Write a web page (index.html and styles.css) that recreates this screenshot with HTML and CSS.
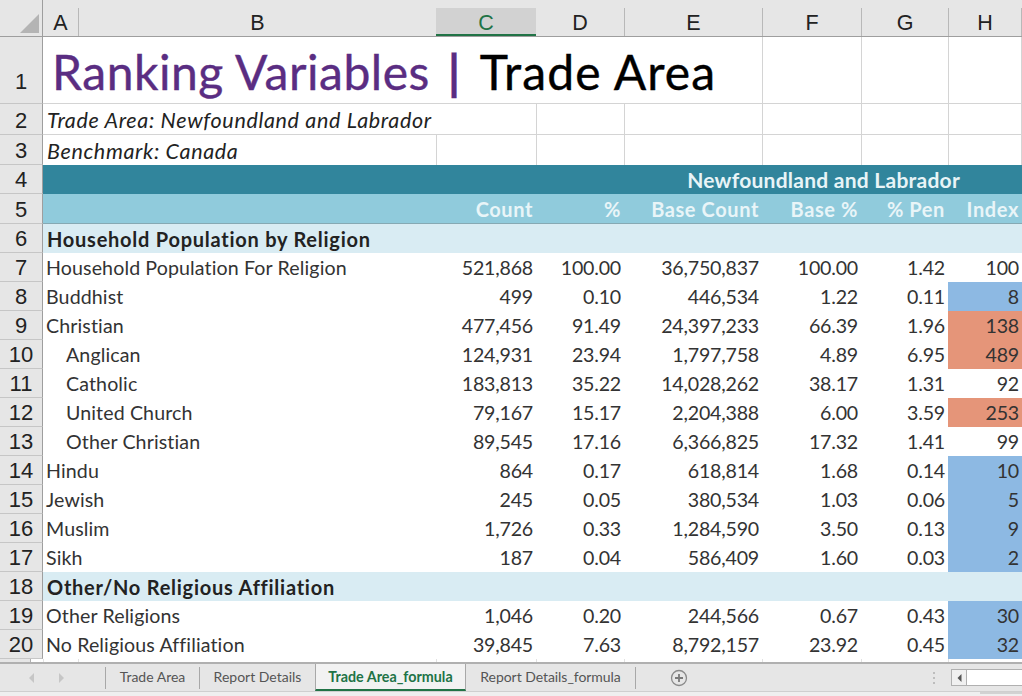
FILE: index.html

```html
<!DOCTYPE html>
<html lang="en">
<head>
    <meta charset="UTF-8">
    <meta name="viewport" content="width=device-width, initial-scale=1.0">
    <title>Ranking Variables</title>
    <link rel="stylesheet" href="styles.css">
</head>
<body>
    <table class="sheet">
        <colgroup>
            <col class="c-rh"><col class="c-a"><col class="c-b"><col class="c-c"><col class="c-d"><col class="c-e"><col class="c-f"><col class="c-g"><col class="c-h">
        </colgroup>
        <tr class="r-head">
            <th class="corner"><svg width="42" height="36" viewBox="0 0 42 36"><polygon points="20,33 39,14 39,33" fill="#b4b4b4"/></svg></th>
            <th><div class="col first-col">A</div></th>
            <th><div class="col">B</div></th>
            <th><div class="col sel">C</div></th>
            <th><div class="col after-sel">D</div></th>
            <th><div class="col">E</div></th>
            <th><div class="col">F</div></th>
            <th><div class="col">G</div></th>
            <th><div class="col last-col">H</div></th>
        </tr>
        <tr class="r-title">
            <th class="rh">1</th>
            <td colspan="5" class="title"><span class="purple">Ranking Variables <span class="pipe">|</span></span> Trade Area</td>
            <td class="line"></td><td class="line"></td><td class="line"></td>
        </tr>
        <tr class="r-2">
            <th class="rh">2</th>
            <td colspan="3" class="line note">Trade Area: Newfoundland and Labrador</td>
            <td class="line"></td><td class="line"></td><td class="line"></td><td class="line"></td><td class="line"></td>
        </tr>
        <tr class="r-3">
            <th class="rh">3</th>
            <td colspan="2" class="line note">Benchmark: Canada</td>
            <td class="line"></td><td class="line"></td><td class="line"></td><td class="line"></td><td class="line"></td><td class="line"></td>
        </tr>
        <tr class="r-4">
            <th class="rh">4</th>
            <td colspan="8" class="banner">Newfoundland and Labrador</td>
        </tr>
        <tr class="r-5">
            <th class="rh">5</th>
            <td colspan="2" class="sub"></td>
            <td class="sub">Count</td><td class="sub">%</td><td class="sub">Base Count</td><td class="sub">Base %</td><td class="sub">% Pen</td><td class="sub">Index</td>
        </tr>
        <tr>
            <th class="rh">6</th>
            <td colspan="8" class="section">Household Population by Religion</td>
        </tr>
        <tr>
            <th class="rh">7</th>
            <td colspan="2" class="label">Household Population For Religion</td>
            <td>521,868</td><td>100.00</td><td>36,750,837</td><td>100.00</td><td>1.42</td><td>100</td>
        </tr>
        <tr>
            <th class="rh">8</th>
            <td colspan="2" class="label">Buddhist</td>
            <td>499</td><td>0.10</td><td>446,534</td><td>1.22</td><td>0.11</td><td class="low">8</td>
        </tr>
        <tr>
            <th class="rh">9</th>
            <td colspan="2" class="label">Christian</td>
            <td>477,456</td><td>91.49</td><td>24,397,233</td><td>66.39</td><td>1.96</td><td class="high">138</td>
        </tr>
        <tr>
            <th class="rh">10</th>
            <td colspan="2" class="label sub-item">Anglican</td>
            <td>124,931</td><td>23.94</td><td>1,797,758</td><td>4.89</td><td>6.95</td><td class="high">489</td>
        </tr>
        <tr>
            <th class="rh">11</th>
            <td colspan="2" class="label sub-item">Catholic</td>
            <td>183,813</td><td>35.22</td><td>14,028,262</td><td>38.17</td><td>1.31</td><td>92</td>
        </tr>
        <tr>
            <th class="rh">12</th>
            <td colspan="2" class="label sub-item">United Church</td>
            <td>79,167</td><td>15.17</td><td>2,204,388</td><td>6.00</td><td>3.59</td><td class="high">253</td>
        </tr>
        <tr>
            <th class="rh">13</th>
            <td colspan="2" class="label sub-item">Other Christian</td>
            <td>89,545</td><td>17.16</td><td>6,366,825</td><td>17.32</td><td>1.41</td><td>99</td>
        </tr>
        <tr>
            <th class="rh">14</th>
            <td colspan="2" class="label">Hindu</td>
            <td>864</td><td>0.17</td><td>618,814</td><td>1.68</td><td>0.14</td><td class="low">10</td>
        </tr>
        <tr>
            <th class="rh">15</th>
            <td colspan="2" class="label">Jewish</td>
            <td>245</td><td>0.05</td><td>380,534</td><td>1.03</td><td>0.06</td><td class="low">5</td>
        </tr>
        <tr>
            <th class="rh">16</th>
            <td colspan="2" class="label">Muslim</td>
            <td>1,726</td><td>0.33</td><td>1,284,590</td><td>3.50</td><td>0.13</td><td class="low">9</td>
        </tr>
        <tr>
            <th class="rh">17</th>
            <td colspan="2" class="label">Sikh</td>
            <td>187</td><td>0.04</td><td>586,409</td><td>1.60</td><td>0.03</td><td class="low">2</td>
        </tr>
        <tr>
            <th class="rh">18</th>
            <td colspan="8" class="section">Other/No Religious Affiliation</td>
        </tr>
        <tr>
            <th class="rh">19</th>
            <td colspan="2" class="label">Other Religions</td>
            <td>1,046</td><td>0.20</td><td>244,566</td><td>0.67</td><td>0.43</td><td class="low">30</td>
        </tr>
        <tr>
            <th class="rh">20</th>
            <td colspan="2" class="label">No Religious Affiliation</td>
            <td>39,845</td><td>7.63</td><td>8,792,157</td><td>23.92</td><td>0.45</td><td class="low">32</td>
        </tr>
        <tr class="r-cut">
            <th class="rh-cut"><div class="cut-label">20</div></th>
            <td class="tick"></td><td class="tick"></td><td class="tick"></td><td class="tick"></td><td class="tick"></td><td class="tick"></td><td class="tick"></td><td class="tick"></td>
        </tr>
    </table>

    <div class="tabbar">
        <div class="nav">
            <svg width="8" height="10" viewBox="0 0 8 10"><polygon points="6,0 1,5 6,10" fill="#c6c6c6"/></svg>
            <svg width="8" height="10" viewBox="0 0 8 10"><polygon points="2,0 7,5 2,10" fill="#c6c6c6"/></svg>
        </div>
        <div class="tab first">Trade Area</div>
        <div class="tab second">Report Details</div>
        <div class="tab active">Trade Area_formula</div>
        <div class="tab last">Report Details_formula</div>
        <svg class="add" width="18" height="18" viewBox="0 0 18 18">
            <circle cx="9" cy="9" r="7.5" fill="none" stroke="#8a8a8a" stroke-width="1.3"/>
            <path d="M9 5v8M5 9h8" stroke="#7a7a7a" stroke-width="1.8"/>
        </svg>
        <div class="dots"><i></i><i></i><i></i></div>
        <div class="scroll">
            <div class="scroll-btn"><svg width="5" height="8" viewBox="0 0 5 8"><polygon points="4.5,0 0.5,4 4.5,8" fill="#555"/></svg></div>
        </div>
    </div>
    <div class="status"><div class="status-line"></div></div>
</body>
</html>
```

FILE: styles.css

```css
* {
    box-sizing: border-box;
}
html, body {
    margin: 0;
    height: 696px;
    overflow: hidden;
    background: #fff;
}
.sheet {
    border-collapse: separate;
    border-spacing: 0;
    table-layout: fixed;
    width: 1022px;
    font-family: "Lato", "Open Sans", sans-serif;
    font-size: 19.6px;
    color: #333;
}
.c-rh { width: 43px; }
.c-a { width: 35px; }
.c-b { width: 358px; }
.c-c { width: 100px; }
.c-d { width: 88px; }
.c-e { width: 138px; }
.c-f { width: 99px; }
.c-g { width: 87px; }
.c-h { width: 74px; }

tr {
    height: 29px;
}
td {
    padding: 0 3px 0 3px;
    height: 29px;
    line-height: 28px;
    letter-spacing: -.2px;
    text-align: right;
    white-space: nowrap;
    overflow: hidden;
}

/* column header */
.r-head {
    height: 37px;
}
.r-head th {
    padding: 8px 0 0;
    height: 37px;
    background: #e6e6e6;
    border-bottom: 1px solid #9e9e9e;
    font-family: "Liberation Sans", Arial, sans-serif;
    font-weight: normal;
    font-size: 21.5px;
    color: #222;
}
.r-head .corner {
    padding: 0;
    border-right: 1px solid #9e9e9e;
    line-height: 0;
}
.col {
    height: 28px;
    line-height: 30px;
    text-align: center;
    border-left: 1px solid #b8b8b8;
}
.col.first-col, .col.after-sel {
    border-left: 0;
}
.col.last-col {
    border-right: 1px solid #b8b8b8;
}
.col.sel {
    height: 28px;
    background: #d2d2d2;
    border-left: 0;
    border-bottom: 2px solid #217346;
    color: #217346;
}

/* row header */
.rh {
    padding: 0;
    background: #e6e6e6;
    border-right: 1px solid #9e9e9e;
    border-bottom: 1px solid #c6c6c6;
    font-family: "Liberation Sans", Arial, sans-serif;
    font-weight: normal;
    font-size: 22px;
    line-height: 27px;
    color: #222;
    text-align: center;
    vertical-align: bottom;
}
.r-title .rh {
    padding-bottom: 8px;
}
.rh-cut {
    padding: 0;
    height: 3px;
}
.cut-label {
    width: 31px;
    height: 3px;
    overflow: hidden;
    background: #e6e6e6;
    border-right: 1px solid #b0b0b0;
    font-family: "Liberation Sans", Arial, sans-serif;
    font-weight: normal;
    font-size: 22px;
    line-height: 24px;
    text-indent: 4px;
    text-align: center;
    color: #222;
}
.r-cut {
    height: 3px;
}
.tick {
    padding: 0;
    height: 3px;
    line-height: 0;
    border-left: 1px solid #e2e2e2;
}

/* top rows */
.r-title, .r-title td {
    height: 67px;
}
.r-2, .r-2 td {
    height: 31px;
}
.r-3, .r-3 td {
    height: 30px;
}
.r-4, .r-4 td {
    height: 29px;
}
.r-5, .r-5 td {
    height: 30px;
}
.title {
    padding-top: 3px;
    padding-left: 9px;
    text-align: left;
    font-size: 48px;
    letter-spacing: 1.15px;
    line-height: 63px;
    color: #000;
    -webkit-text-stroke: .4px;
    border-bottom: 1px solid #d4d4d4;
}
.purple {
    color: #5a2d82;
    letter-spacing: .55px;
}
.pipe {
    margin: 0 7px 0 5px;
    font-weight: bold;
}
.line {
    border-left: 1px solid #d4d4d4;
    border-bottom: 1px solid #d4d4d4;
}
.line:last-child {
    border-right: 1px solid #d4d4d4;
}
.r-3 .line {
    border-bottom: 0;
}
.note {
    padding-top: 2px;
    padding-left: 4px;
    text-align: left;
    font-size: 21.5px;
    letter-spacing: .65px;
    line-height: 28px;
    font-style: italic;
    color: #222;
    border-left: 0;
}
.r-3 .note {
    padding-top: 3px;
    line-height: 27px;
}
.banner {
    background: #31859c;
    color: #e8f4f7;
    font-weight: bold;
    font-size: 21px;
    letter-spacing: .25px;
    padding-right: 62px;
}
.sub {
    background: #90cbdc;
    color: #e9f5f8;
    font-weight: bold;
    font-size: 20px;
    letter-spacing: .6px;
    border-bottom: 1px solid #86a9b3;
}
.section {
    padding-left: 4px;
    text-align: left;
    background: #d9ecf3;
    font-weight: bold;
    font-size: 20px;
    letter-spacing: .75px;
    color: #222;
}
.label {
    padding-left: 3px;
    letter-spacing: .12px;
    text-align: left;
}
.sub-item {
    padding-left: 23px;
}
.low {
    background: #8db9e3;
}
.high {
    background: #e59579;
}

/* sheet tabs */
.tabbar {
    display: flex;
    align-items: center;
    height: 30px;
    background: #e6e6e6;
    border-top: 2px solid #b0b0b0;
    border-bottom: 1px solid #cfcfcf;
    font-family: "Lato", "Open Sans", sans-serif;
    font-size: 14px;
    color: #555;
}
.nav {
    display: flex;
    gap: 21px;
    width: 105px;
    padding-left: 28px;
}
.tab {
    height: 22px;
    line-height: 20px;
    text-align: center;
    border-left: 1px solid #a8a8a8;
    margin-top: 1px;
}
.tab.first {
    width: 94px;
}
.tab.second {
    width: 116px;
}
.tab.active {
    width: 151px;
    height: 27px;
    margin-top: 0;
    line-height: 25px;
    font-size: 14.3px;
    background: #f2f2f2;
    border-left: 1px solid #a8a8a8;
    border-right: 1px solid #a8a8a8;
    border-bottom: 2px solid #217346;
    color: #217346;
    font-weight: bold;
}
.tab.last {
    width: 170px;
    letter-spacing: -.05px;
    border-left: 0;
    border-right: 1px solid #a8a8a8;
}
.add {
    margin-left: 34px;
}
.dots {
    display: flex;
    flex-direction: column;
    gap: 3px;
    margin-left: 245px;
}
.dots i {
    width: 2px;
    height: 2px;
    background: #bdbdbd;
}
.scroll {
    flex: 1;
    height: 17px;
    margin-left: 16px;
    background: #fff;
    border: 1px solid #b0b0b0;
    border-right: 0;
}
.scroll-btn {
    display: flex;
    align-items: center;
    justify-content: center;
    width: 15px;
    height: 15px;
    background: #f0f0f0;
    border-right: 1px solid #b0b0b0;
}
.status {
    height: 4px;
    background: #efefef;
}
.status-line {
    width: 42px;
    height: 2px;
    margin-left: 980px;
    background: #d2d2d2;
}
```
